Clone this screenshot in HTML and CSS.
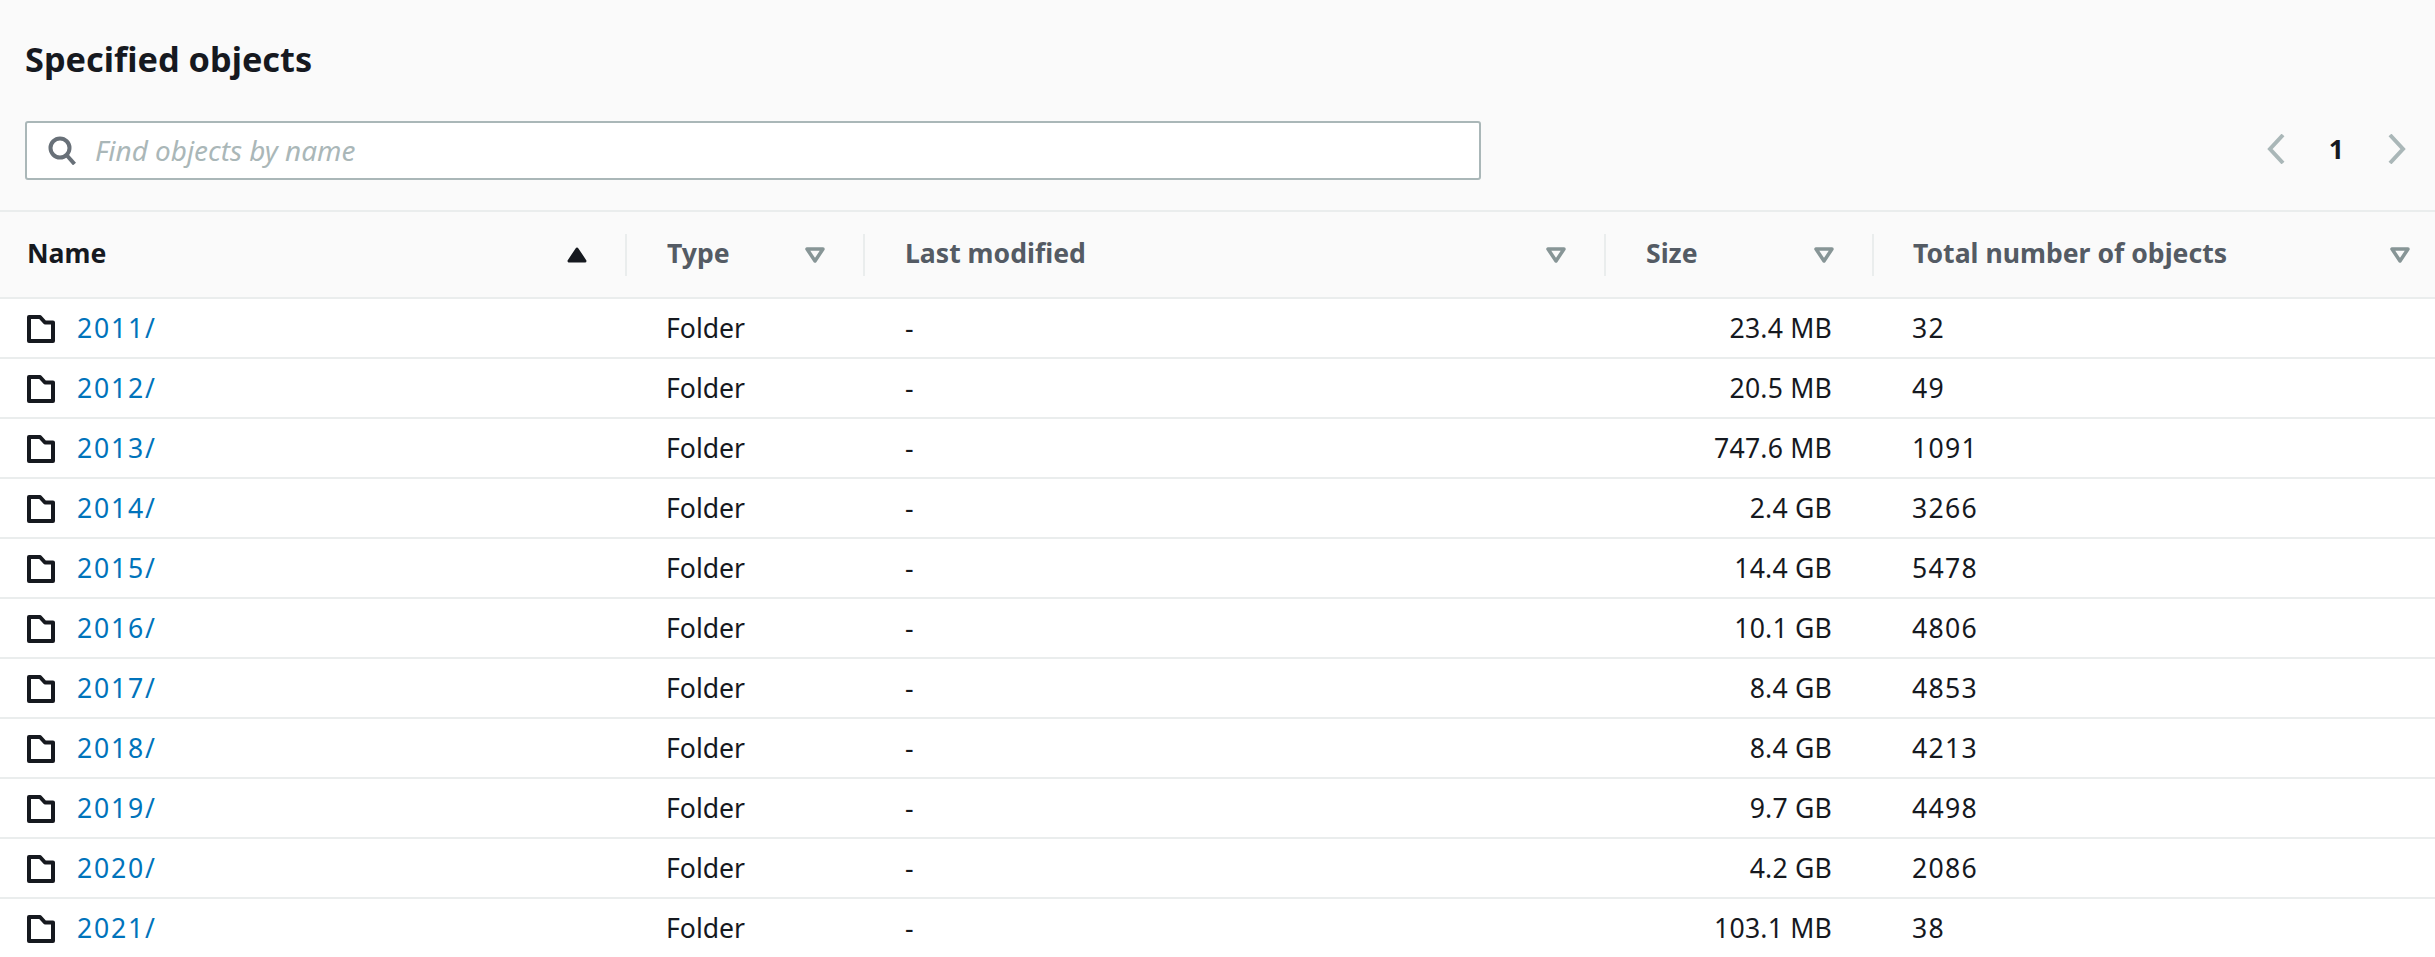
FILE: index.html
```html
<!DOCTYPE html>
<html lang="en">
<head>
    <meta charset="UTF-8">
    <title>Specified objects</title>
    <link rel="stylesheet" href="styles.css">
</head>
<body>
<svg class="sprites" width="0" height="0">
    <symbol id="folder" viewBox="0 0 28 28"><path d="M2 2h11l5 5.500h8v18.500h-24z" fill="none" stroke="#16191f" stroke-width="4" stroke-linejoin="round"/></symbol>
    <symbol id="caret" viewBox="0 0 20 16"><path d="M2 2h16l-8 12z" fill="none" stroke="#879596" stroke-width="3.500" stroke-linejoin="round"/></symbol>
</svg>
<div class="panel-head">
    <h2 class="panel-title">Specified objects</h2>
    <div class="tools">
        <div class="search">
            <svg class="search-icon" width="30" height="30" viewBox="0 0 30 30"><circle cx="13" cy="13" r="9.500" fill="none" stroke="#687078" stroke-width="4"/><path d="M19.500 20l8 9" fill="none" stroke="#687078" stroke-width="4"/></svg>
            <span class="placeholder">Find objects by name</span>
        </div>
        <div class="pager">
            <svg width="18" height="30" viewBox="0 0 18 30"><path d="M16 1L3 15l13 14" fill="none" stroke="#aab7b8" stroke-width="4"/></svg>
            <span class="page-num">1</span>
            <svg width="18" height="30" viewBox="0 0 18 30"><path d="M2 1l13 14L2 29" fill="none" stroke="#aab7b8" stroke-width="4"/></svg>
        </div>
    </div>
</div>
<table class="objects">
    <thead>
    <tr>
        <th class="col-name"><div class="th-in sorted"><span class="th-label">Name</span><svg class="caret" width="20" height="16" viewBox="0 0 20 16"><path d="M2 14h16l-8-12z" fill="#16191f" stroke="#16191f" stroke-width="3" stroke-linejoin="round"/></svg></div></th>
        <th class="col-type"><div class="th-in"><span class="th-label">Type</span><svg class="caret" width="20" height="16"><use href="#caret"/></svg></div></th>
        <th class="col-date"><div class="th-in"><span class="th-label">Last modified</span><svg class="caret" width="20" height="16"><use href="#caret"/></svg></div></th>
        <th class="col-size"><div class="th-in"><span class="th-label">Size</span><svg class="caret" width="20" height="16"><use href="#caret"/></svg></div></th>
        <th class="col-total"><div class="th-in last"><span class="th-label">Total number of objects</span><svg class="caret" width="20" height="16"><use href="#caret"/></svg></div></th>
    </tr>
    </thead>
    <tbody>
    <tr><td class="name"><svg class="folder" width="28" height="28"><use href="#folder"/></svg><a href="#">2011/</a></td><td class="type">Folder</td><td class="date">-</td><td class="size">23.4 MB</td><td class="total">32</td></tr>
    <tr><td class="name"><svg class="folder" width="28" height="28"><use href="#folder"/></svg><a href="#">2012/</a></td><td class="type">Folder</td><td class="date">-</td><td class="size">20.5 MB</td><td class="total">49</td></tr>
    <tr><td class="name"><svg class="folder" width="28" height="28"><use href="#folder"/></svg><a href="#">2013/</a></td><td class="type">Folder</td><td class="date">-</td><td class="size">747.6 MB</td><td class="total">1091</td></tr>
    <tr><td class="name"><svg class="folder" width="28" height="28"><use href="#folder"/></svg><a href="#">2014/</a></td><td class="type">Folder</td><td class="date">-</td><td class="size">2.4 GB</td><td class="total">3266</td></tr>
    <tr><td class="name"><svg class="folder" width="28" height="28"><use href="#folder"/></svg><a href="#">2015/</a></td><td class="type">Folder</td><td class="date">-</td><td class="size">14.4 GB</td><td class="total">5478</td></tr>
    <tr><td class="name"><svg class="folder" width="28" height="28"><use href="#folder"/></svg><a href="#">2016/</a></td><td class="type">Folder</td><td class="date">-</td><td class="size">10.1 GB</td><td class="total">4806</td></tr>
    <tr><td class="name"><svg class="folder" width="28" height="28"><use href="#folder"/></svg><a href="#">2017/</a></td><td class="type">Folder</td><td class="date">-</td><td class="size">8.4 GB</td><td class="total">4853</td></tr>
    <tr><td class="name"><svg class="folder" width="28" height="28"><use href="#folder"/></svg><a href="#">2018/</a></td><td class="type">Folder</td><td class="date">-</td><td class="size">8.4 GB</td><td class="total">4213</td></tr>
    <tr><td class="name"><svg class="folder" width="28" height="28"><use href="#folder"/></svg><a href="#">2019/</a></td><td class="type">Folder</td><td class="date">-</td><td class="size">9.7 GB</td><td class="total">4498</td></tr>
    <tr><td class="name"><svg class="folder" width="28" height="28"><use href="#folder"/></svg><a href="#">2020/</a></td><td class="type">Folder</td><td class="date">-</td><td class="size">4.2 GB</td><td class="total">2086</td></tr>
    <tr><td class="name"><svg class="folder" width="28" height="28"><use href="#folder"/></svg><a href="#">2021/</a></td><td class="type">Folder</td><td class="date">-</td><td class="size">103.1 MB</td><td class="total">38</td></tr>
    </tbody>
</table>
</body>
</html>
```

FILE: styles.css
```css
html, body {
    margin: 0;
    padding: 0;
    height: 100%;
    overflow: hidden;
    background: #fff;
    color: #16191f;
    font-family: "Noto Sans", sans-serif;
    font-size: 26.6px;
}

.sprites {
    display: block;
    height: 0;
}

.panel-head {
    box-sizing: border-box;
    height: 212px;
    padding: 36px 29px 0 25px;
    background: #fafafa;
    border-bottom: 2px solid #eaeded;
}

.panel-title {
    margin: 0;
    height: 46px;
    line-height: 46px;
    font-size: 34.300px;
    font-weight: 700;
}

.tools {
    display: flex;
    align-items: center;
    justify-content: space-between;
    margin-top: 39px;
}

.search {
    box-sizing: border-box;
    display: flex;
    align-items: center;
    gap: 18px;
    width: 1456px;
    height: 59px;
    padding: 0 0 2px 20px;
    background: #fff;
    border: 2px solid #aab7b8;
    border-radius: 3px;
}

.placeholder {
    color: #aab7b8;
    font-size: 27.900px;
    font-style: italic;
}

.pager {
    display: flex;
    align-items: center;
    gap: 44px;
    margin-bottom: 3px;
}

.page-num {
    font-weight: 700;
}

.objects {
    width: 100%;
    table-layout: fixed;
    border-collapse: collapse;
}

.objects th {
    height: 85px;
    padding: 0;
    background: #fafafa;
    border-bottom: 2px solid #eaeded;
    color: #545b64;
    font-weight: 700;
    text-align: left;
}

.col-name { width: 625px; }
.col-type { width: 238px; }
.col-date { width: 741px; }
.col-size { width: 268px; }

.th-in {
    display: flex;
    align-items: center;
    justify-content: space-between;
    height: 42px;
    padding: 0 38px 0 40px;
    border-left: 2px solid #eaeded;
}

.th-label {
    margin-bottom: 3px;
}

.th-in.sorted {
    padding-left: 27px;
    border-left: 0;
    color: #16191f;
}

.th-in.last {
    padding: 0 25px 0 39px;
}

.caret {
    flex: none;
}

.objects td {
    box-sizing: border-box;
    height: 60px;
    padding: 0 0 1px;
    border-bottom: 2px solid #eaeded;
}

.objects .name {
    padding-left: 27px;
}

.folder {
    margin-right: 22px;
    vertical-align: -5px;
}

.name a {
    color: #0073bb;
    text-decoration: none;
    letter-spacing: 1.800px;
}

.objects .type {
    padding-left: 41px;
}

.objects .date {
    padding-left: 42px;
}

.objects .size {
    padding-right: 40px;
    text-align: right;
    letter-spacing: 0.200px;
}

.objects .total {
    padding-left: 40px;
    letter-spacing: 1.300px;
}
```
